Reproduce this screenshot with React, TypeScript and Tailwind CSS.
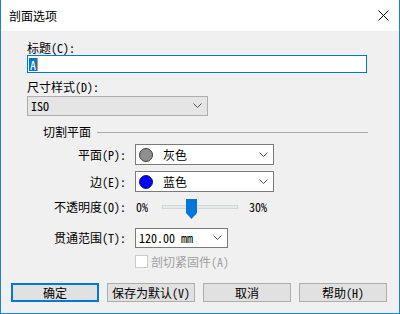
import React from "react";

const Chevron = () => (
  <svg width="9" height="6" viewBox="0 0 9 6" className="shrink-0">
    <path d="M0.5 0.5 L4.5 4.5 L8.5 0.5" fill="none" stroke="#505050" strokeWidth="1" />
  </svg>
);

export default function App() {
  return (
    <div className="w-[400px] h-[314px] bg-[#f0f0f0] border-x border-b border-[#1883d7] flex flex-col text-[12px] text-black font-['Noto_Sans_Mono_CJK_SC','Noto_Sans_CJK_SC',monospace] overflow-hidden">
      <div className="h-[31px] shrink-0 bg-white flex items-center justify-between pl-2 pr-[10px]">
        <span className="font-['Noto_Sans_CJK_SC',sans-serif] text-[12px] leading-[14px]">剖面选项</span>
        <svg width="11" height="11" viewBox="0 0 11 11">
          <path d="M0.5 0.5 L10.5 10.5 M10.5 0.5 L0.5 10.5" stroke="#000" strokeWidth="1" />
        </svg>
      </div>

      <div className="flex flex-col pl-[26px]">
        <div className="mt-[10px] h-[14px] leading-[14px]">标题(C):</div>
        <div className="h-[18px] w-[340px] border border-[#0078d7] bg-white flex items-center pl-px">
          <span className="h-[13px] w-[8px] leading-[13px] bg-[#0078d7] text-white text-center">A</span>
          <span className="h-[13px] w-px bg-[#f08a24]" />
        </div>

        <div className="mt-[7px] h-[14px] leading-[14px]">尺寸样式(D):</div>
        <div className="mt-[2px] h-[20px] w-[181px] border border-[#adadad] bg-[#e5e5e5] flex items-center justify-between pl-[3px] pr-[5px]">
          <span className="leading-[14px]">ISO</span>
          <Chevron />
        </div>

        <div className="mt-[9px] h-[14px] w-[341px] flex items-center">
          <span className="ml-[16px] leading-[14px]">切割平面</span>
          <div className="flex-1 ml-[6px] h-px bg-[#a9a9a9]" />
        </div>

        <div className="mt-[5px] h-[21px] flex items-center">
          <span className="w-[99px] text-right leading-[14px]">平面(P):</span>
          <div className="ml-[9px] h-[21px] w-[139px] border border-[#7a7a7a] bg-white flex items-center pl-[3px] pr-[5px]">
            <span className="w-[14px] h-[14px] rounded-full border border-[#3c3c3c] bg-[#8f8f8f] shrink-0" />
            <span className="ml-[10px] flex-1 leading-[14px]">灰色</span>
            <Chevron />
          </div>
        </div>

        <div className="mt-[6px] h-[21px] flex items-center">
          <span className="w-[99px] text-right leading-[14px]">边(E):</span>
          <div className="ml-[9px] h-[21px] w-[139px] border border-[#7a7a7a] bg-white flex items-center pl-[3px] pr-[5px]">
            <span className="w-[14px] h-[14px] rounded-full border border-[#1a1a6a] bg-[#0000ff] shrink-0" />
            <span className="ml-[10px] flex-1 leading-[14px]">蓝色</span>
            <Chevron />
          </div>
        </div>

        <div className="mt-[7px] h-[16px] flex items-center">
          <span className="w-[99px] text-right leading-[14px]">不透明度(O):</span>
          <span className="ml-[10px] leading-[14px]">0%</span>
          <div className="ml-[14px] relative w-[76px] h-[16px] flex items-center">
            <div className="w-full h-[4px] bg-[#e7eaea] border border-[#d6d6d6]" />
            <svg width="11" height="20" viewBox="0 0 11 20" className="absolute left-[24px] top-0">
              <path d="M0 0 H11 V14 L5.5 20 L0 14 Z" fill="#0078d7" />
            </svg>
          </div>
          <span className="ml-[11px] leading-[14px]">30%</span>
        </div>

        <div className="mt-[13px] h-[20px] flex items-center">
          <span className="w-[99px] text-right leading-[14px]">贯通范围(T):</span>
          <div className="ml-[9px] h-[20px] w-[93px] border border-[#7a7a7a] bg-white flex items-center justify-between pl-[3px] pr-[5px]">
            <span className="leading-[14px]">120.00 mm</span>
            <Chevron />
          </div>
        </div>

        <div className="mt-[7px] h-[13px] flex items-center pl-[108px]">
          <span className="w-[13px] h-[13px] border border-[#cccccc] bg-white shrink-0" />
          <span className="ml-[3px] leading-[14px] text-[#a0a0a0]">剖切紧固件(A)</span>
        </div>
      </div>

      <div className="mt-[15px] pl-[10px] flex gap-[8px]">
        <div className="w-[88px] h-[19px] border-2 border-[#0078d7] bg-[#e1e1e1] flex items-center justify-center leading-[14px]">确定</div>
        <div className="w-[88px] h-[19px] border border-[#adadad] bg-[#e1e1e1] flex items-center justify-center leading-[14px]">保存为默认(V)</div>
        <div className="w-[88px] h-[19px] border border-[#adadad] bg-[#e1e1e1] flex items-center justify-center leading-[14px]">取消</div>
        <div className="w-[88px] h-[19px] border border-[#adadad] bg-[#e1e1e1] flex items-center justify-center leading-[14px]">帮助(H)</div>
      </div>
    </div>
  );
}
